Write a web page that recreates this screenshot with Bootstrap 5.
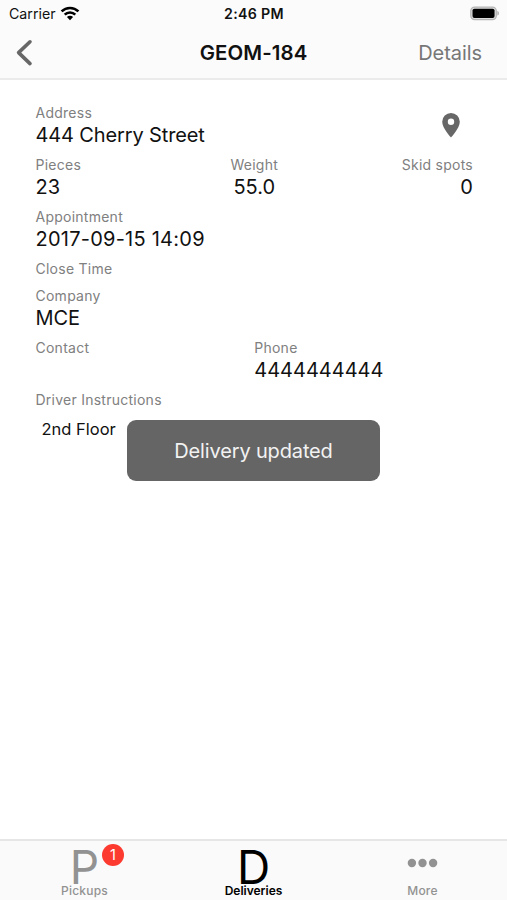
<!DOCTYPE html>
<html lang="en">
<head>
<meta charset="utf-8">
<meta name="viewport" content="width=device-width, initial-scale=1">
<title>GEOM-184</title>
<link href="https://cdn.jsdelivr.net/npm/bootstrap@5.3.0/dist/css/bootstrap.min.css" rel="stylesheet">
<style>
body{font-family:Inter,"Liberation Sans",sans-serif;color:#111;background:#fff;overflow:hidden}
.app-header{height:80px;background:#fbfbfb;border-bottom:2px solid #ebebeb}
.status-row{height:27px;font-size:14.2px;line-height:27px;padding:0 8px 0 9px}
.status-row>div,.title-row>div{flex:1 1 0}
.clock{font-weight:600;letter-spacing:.3px}
.title-row{height:51px;padding:0 25px 0 16px}
.back-link{margin-right:9px}
.screen-title{font-size:20.4px;font-weight:600;letter-spacing:.1px;line-height:28px;color:#111}
.details-link{font-size:20px;line-height:28px;color:#777;text-decoration:none;letter-spacing:-.05px}
.stop-info{padding:23.6px 34px 0 35.5px}
.lbl{font-size:14px;line-height:18px;color:#808080;letter-spacing:.25px}
.val{font-size:20px;line-height:26px;height:26px;white-space:nowrap}
.val-address{letter-spacing:-.13px}
.val-date{letter-spacing:.24px}
.field{margin-bottom:8px}
.field-empty{margin-bottom:9.5px}
.note{font-size:16.500px;line-height:22px;padding:8.500px 0 0 6px}
.update-toast{left:127px;top:420px;width:253px;height:61px;border-radius:9px;background:#656565;color:#f2f2f2;font-size:20px;letter-spacing:-.15px}
.tab-bar{height:61px;background:#fafafa;border-top:2px solid #e6e6e6}
.tab-item{color:#929292;text-decoration:none;flex:1 1 0}
.tab-item.current{color:#000}
.tab-glyph{height:43px;font-size:46px;line-height:52px}
.tab-text{font-size:12px;line-height:14px;font-weight:500;letter-spacing:.2px}
.tab-item.current .tab-text{font-weight:600;letter-spacing:0}
.count{left:102px;top:3px;width:22px;height:22px;font-size:14.5px;line-height:22px;background:#fc3a30;color:#fff}
</style>
</head>
<body class="vh-100 d-flex flex-column position-relative">
<header class="app-header flex-shrink-0">
  <div class="status-row d-flex align-items-center">
    <div class="d-flex align-items-center"><span>Carrier</span>
      <svg class="ms-1" width="20" height="15" viewBox="0 0 20 15" fill="none" stroke="#000" stroke-width="2.6"><path d="M1.600 5.400a12 12 0 0 1 16.800 0M4.700 8.700a7.500 7.500 0 0 1 10.600 0"/><path d="M10 14.200 6.900 11a4.400 4.400 0 0 1 6.200 0z" fill="#000" stroke="none"/></svg>
    </div>
    <div class="clock text-center">2:46 PM</div>
    <div class="d-flex justify-content-end">
      <svg width="29" height="15" viewBox="0 0 30 15"><rect x=".8" y=".8" width="26.400" height="13" rx="4" fill="#ddd" stroke="#b5b5b5" stroke-width="1.300"/><rect x="2.600" y="2.500" width="22.800" height="9.700" rx="2" fill="#000"/><path d="M28.300 5c2.100.5 2.100 4.100 0 4.600z" fill="#aaa"/></svg>
    </div>
  </div>
  <div class="title-row d-flex align-items-center">
    <div class="back-link d-flex"><svg width="17" height="28" viewBox="0 0 17 28" fill="none" stroke="#676767" stroke-width="3.600" stroke-linecap="round" stroke-linejoin="round"><path d="M14 2.800 2.600 13.600 14 24.600"/></svg></div>
    <h1 class="screen-title m-0">GEOM-184</h1>
    <div class="text-end"><a class="details-link" href="#">Details</a></div>
  </div>
</header>

<main class="stop-info flex-grow-1">
  <div class="field d-flex justify-content-between">
    <div><div class="lbl">Address</div><div class="val val-address">444 Cherry Street</div></div>
    <svg class="mt-2 me-2" width="27" height="27" viewBox="0 0 27 27"><path fill="#676767" fill-rule="evenodd" d="M13 1a8.800 8.800 0 0 0-8.800 8.800c0 6.400 8.800 15.700 8.800 15.700s8.800-9.300 8.800-15.700A8.800 8.800 0 0 0 13 1zm0 5.600a3.200 3.200 0 1 1 0 6.400 3.200 3.200 0 0 1 0-6.400z"/></svg>
  </div>
  <div class="row g-0 field">
    <div class="col-4"><div class="lbl">Pieces</div><div class="val">23</div></div>
    <div class="col-4 text-center"><div class="lbl">Weight</div><div class="val">55.0</div></div>
    <div class="col-4 text-end"><div class="lbl">Skid spots</div><div class="val">0</div></div>
  </div>
  <div class="field"><div class="lbl">Appointment</div><div class="val val-date">2017-09-15 14:09</div></div>
  <div class="field-empty"><div class="lbl">Close Time</div></div>
  <div class="field"><div class="lbl">Company</div><div class="val val-address">MCE</div></div>
  <div class="row g-0 field">
    <div class="col-6"><div class="lbl">Contact</div></div>
    <div class="col-6"><div class="lbl">Phone</div><div class="val">4444444444</div></div>
  </div>
  <div><div class="lbl">Driver Instructions</div><div class="note">2nd Floor</div></div>
</main>

<nav class="tab-bar d-flex flex-shrink-0 text-center">
  <a class="tab-item position-relative" href="#"><div class="tab-glyph">P</div><div class="tab-text">Pickups</div><span class="count position-absolute rounded-circle">1</span></a>
  <a class="tab-item current" href="#"><div class="tab-glyph">D</div><div class="tab-text">Deliveries</div></a>
  <a class="tab-item" href="#"><div class="tab-glyph d-flex justify-content-center align-items-center"><svg width="31" height="10" viewBox="0 0 31 10" fill="#929292"><circle cx="4.900" cy="5" r="4.200"/><circle cx="15.500" cy="5" r="4.200"/><circle cx="26.100" cy="5" r="4.200"/></svg></div><div class="tab-text">More</div></a>
</nav>

<div class="update-toast position-absolute d-flex align-items-center justify-content-center" role="status">Delivery updated</div>
<script src="https://cdn.jsdelivr.net/npm/bootstrap@5.3.0/dist/js/bootstrap.bundle.min.js"></script>
</body>
</html>
